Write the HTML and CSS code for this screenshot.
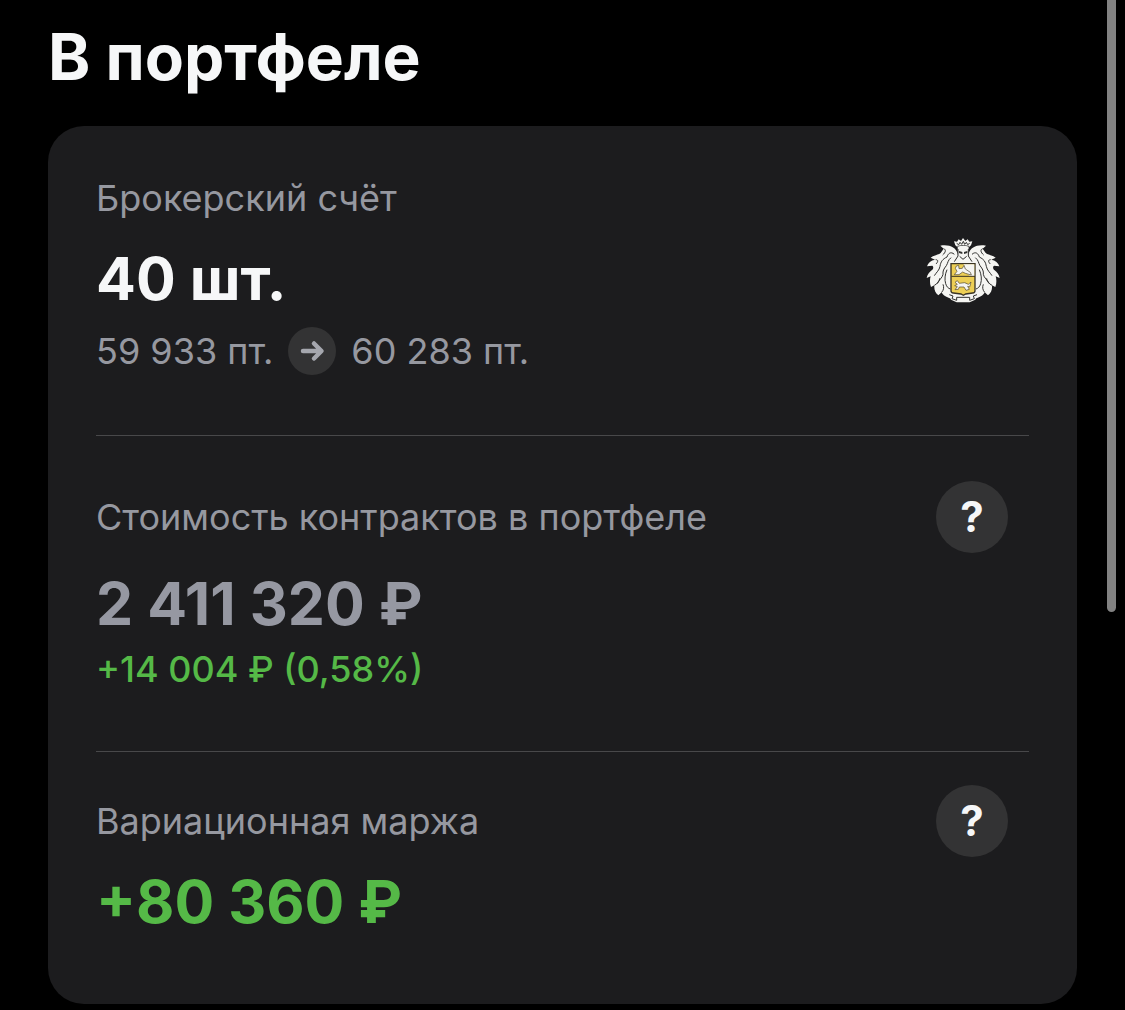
FILE: index.html
```html
<!DOCTYPE html>
<html lang="ru">

<head>
    <meta charset="UTF-8">
    <meta name="viewport" content="width=device-width, initial-scale=1.0">
    <title>В портфеле</title>
    <link rel="stylesheet" href="styles.css">
</head>

<body>
    <main class="portfolio">
        <h1 class="title">В портфеле</h1>
        <div class="card">
            <section class="block account">
                <div class="account-info">
                    <h2 class="label">Брокерский счёт</h2>
                    <p class="value">40 шт.</p>
                    <p class="price">
                        <span>59 933 пт.</span>
                        <span class="arrow">
                            <svg viewBox="0 0 48 48" aria-hidden="true">
                                <path d="M15 24H33M26 16.500L33.500 24L26 31.500" />
                            </svg>
                        </span>
                        <span>60 283 пт.</span>
                    </p>
                </div>
                <svg class="crest" viewBox="33 34 222 198" aria-hidden="true">
                    <defs>
                        <g id="wing">
                            <path class="plume" d="M128 84C122 65 104 56 76 60L86 69L77 82C70 88 58 88 47 96L60 102C48 104 39 111 36 122L52 120C56 123 56 129 50 134C43 139 37 147 35 157L47 152C44 162 44 173 48 184L58 179C57 190 60 201 70 209L80 200C84 210 96 216 112 220L146 216V110L130 96Z" />
                            <path class="vein" d="M118 86C107 76 99 84 96 94C83 100 77 108 75 122C73 134 64 140 58 150M86 69C94 72 92 80 83 88M62 102C70 102 70 108 63 115M108 96C98 104 99 112 94 120C86 130 83 136 84 146C82 157 72 162 66 174M96 132C90 146 88 162 92 174C95 184 100 188 106 190M58 179C68 174 74 166 74 158M80 200C87 192 87 184 84 176" />
                        </g>
                    </defs>
                    <use href="#wing" />
                    <use href="#wing" transform="translate(289 0) scale(-1 1)" />
                    <!-- ribbon -->
                    <path class="plume" d="M101 205L125 213H164L188 205L181 222L164 230H125L108 222Z" />
                    <path class="vein" d="M103 207L114 211L111 219L125 224V215H164V224L178 219L175 211L186 207" />
                    <!-- crown -->
                    <path class="plume" d="M121 59L117 47L126 48L131 41L138 46L144 37L151 46L158 41L163 48L172 47L168 59L162 64H127Z" />
                    <path class="vein" d="M125 53L131 57L135 50L140 56L145 47L149 56L154 50L158 57L164 53M127 62Q145 57 162 62" />
                    <!-- helmet -->
                    <path class="plume" d="M128 64Q145 57 161 64L160 91L171 112H117L129 91Z" />
                    <path class="vein" d="M129 70V91L118 108M160 70V91L171 108M134 92L144 101L155 92" />
                    <path class="visor" d="M132 76L142 79V85L132 82ZM157 76L147 79V85L157 82Z" />
                    <!-- shield -->
                    <path class="shield" d="M108 114H180V195Q180 201 173 202L152 205L145 209L138 205L115 202Q108 201 108 195Z" />
                    <path class="field" d="M146 116H178V151H165L151 137Z" />
                    <path class="shield-line" d="M109 152H180" />
                    <path class="beast" d="M118 147L126 137L121 128L124 121L131 119L132 129L142 128L147 119L151 130L166 140L169 148L151 143L143 139L132 147Z" />
                    <path class="beast" d="M120 170L127 165L133 173L149 171L160 176L168 169L164 184L158 182L163 191L153 194L147 184L133 184L130 191L120 192L127 183L119 180L127 176Z" />
                </svg>
            </section>

            <section class="block contracts">
                <div class="block-head">
                    <h2 class="label">Стоимость контрактов в портфеле</h2>
                    <button class="help" type="button" title="Стоимость контрактов">?</button>
                </div>
                <p class="value muted">2 411 320 ₽</p>
                <p class="change">+14 004 ₽ (0,58%)</p>
            </section>

            <section class="block margin">
                <div class="block-head">
                    <h2 class="label">Вариационная маржа</h2>
                    <button class="help" type="button" title="Вариационная маржа">?</button>
                </div>
                <p class="value up">+80 360 ₽</p>
            </section>
        </div>
    </main>
    <div class="scroll-thumb"></div>
</body>

</html>
```

FILE: styles.css
```css
* {
    box-sizing: border-box;
}

body {
    position: relative;
    margin: 0;
    background-color: #000;
    color: #f6f7f8;
    font-family: "Inter", "Liberation Sans", sans-serif;
}

h1, h2, p {
    margin: 0;
}

.portfolio {
    padding: 17px 48px 6px;
}

.title {
    margin-bottom: 29px;
    font-size: 64px;
    font-weight: 700;
    line-height: 80px;
}

.card {
    padding: 0 48px;
    border-radius: 36px;
    background-color: #1c1c1e;
}

.block + .block {
    border-top: 1px solid #48484a;
}

.account {
    display: flex;
    align-items: center;
    justify-content: space-between;
    padding: 48px 29px 60px 0;
}

.contracts {
    padding: 45px 0 58px;
}

.margin {
    padding: 33px 0 69px;
}

.block-head {
    display: flex;
    align-items: center;
    justify-content: space-between;
    padding-right: 21px;
}

.label {
    color: #9698a0;
    font-size: 36px;
    font-weight: 400;
    line-height: 48px;
}

.value {
    font-size: 59px;
    font-weight: 700;
    line-height: 66px;
}

.account .value {
    margin: 24px 0 15px;
}

.contracts .value {
    margin: 18px 0 8px;
}

.margin .value {
    margin-top: 12px;
}

.muted {
    color: #9698a2;
}

.price {
    display: flex;
    align-items: center;
    gap: 15px;
    color: #9698a0;
    font-size: 36px;
    line-height: 48px;
}

.change {
    color: #55b947;
    font-size: 36px;
    font-weight: 500;
    line-height: 48px;
}

.up {
    color: #55b947;
}

.arrow {
    width: 48px;
    height: 48px;
    border-radius: 50%;
    background-color: #333334;
}

.arrow svg {
    display: block;
    fill: none;
    stroke: #a5a7ae;
    stroke-width: 4.500;
    stroke-linecap: round;
    stroke-linejoin: round;
}

.help {
    width: 72px;
    height: 72px;
    padding: 0;
    border: 0;
    border-radius: 50%;
    background-color: #333334;
    color: #f6f7f8;
    font: 700 42px/72px "Inter", "Liberation Sans", sans-serif;
    cursor: pointer;
}

.crest {
    flex: none;
    width: 74px;
    height: 66px;
    margin-bottom: 10px;
}

.plume {
    fill: #f5f5f2;
}

.vein {
    fill: none;
    stroke: #30302e;
    stroke-width: 3;
}

.visor {
    fill: #30302e;
}

.shield {
    fill: #edcf55;
    stroke: #3a3424;
    stroke-width: 4;
}

.shield-line {
    stroke: #3a3424;
    stroke-width: 3;
}

.field {
    fill: #f5f5f2;
}

.beast {
    fill: #f5f5f2;
    stroke: #4b432c;
    stroke-width: 2;
}

.scroll-thumb {
    position: absolute;
    top: 0;
    right: 9px;
    width: 9px;
    height: 612px;
    border-radius: 0 0 5px 5px;
    background-color: #828282;
}
```
